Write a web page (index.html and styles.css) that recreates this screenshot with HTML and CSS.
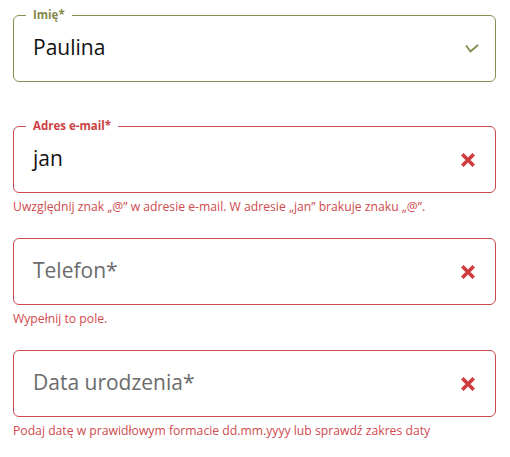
FILE: index.html
```html
<!DOCTYPE html>
<html>
    <head>
        <title>Formularz</title>
        <link rel="stylesheet" href="styles.css">
    </head>
    <body>
        <form class="form">

            <div class="field valid">
                <div class="box">
                    <span class="label">Imię*</span>
                    <span class="value">Paulina</span>
                    <svg class="icon" width="14" height="9" viewBox="0 0 14 9">
                        <polyline points="1,1.5 5.5,7.5 13,1" fill="none" stroke="#86874a" stroke-width="1.8" />
                    </svg>
                </div>
                <div class="msg"></div>
            </div>

            <div class="field invalid">
                <div class="box">
                    <span class="label">Adres e-mail*</span>
                    <span class="value">jan</span>
                    <svg class="icon" width="16" height="16" viewBox="0 0 16 16">
                        <path d="M2.3 2.3 L13.7 13.7 M13.7 2.3 L2.3 13.7" stroke="#cf3c3f" stroke-width="3.6" />
                    </svg>
                </div>
                <div class="msg">Uwzględnij znak „@” w adresie e-mail. W adresie „jan” brakuje znaku „@”.</div>
            </div>

            <div class="field invalid">
                <div class="box">
                    <span class="placeholder">Telefon*</span>
                    <svg class="icon" width="16" height="16" viewBox="0 0 16 16">
                        <path d="M2.3 2.3 L13.7 13.7 M13.7 2.3 L2.3 13.7" stroke="#cf3c3f" stroke-width="3.6" />
                    </svg>
                </div>
                <div class="msg">Wypełnij to pole.</div>
            </div>

            <div class="field invalid">
                <div class="box">
                    <span class="placeholder">Data urodzenia*</span>
                    <svg class="icon" width="16" height="16" viewBox="0 0 16 16">
                        <path d="M2.3 2.3 L13.7 13.7 M13.7 2.3 L2.3 13.7" stroke="#cf3c3f" stroke-width="3.6" />
                    </svg>
                </div>
                <div class="msg">Podaj datę w prawidłowym formacie dd.mm.yyyy lub sprawdź zakres daty</div>
            </div>

        </form>
    </body>
</html>
```

FILE: styles.css
```css
body {
    margin: 0;
    background-color: #fff;
    font-family: "Open Sans", "Noto Sans", sans-serif;
}

.form {
    padding: 15px 14px 0 13px;
}

.field {
    margin-bottom: 23px;
}

.field.valid {
    margin-bottom: 22px;
}

.box {
    position: relative;
    display: flex;
    align-items: center;
    height: 65px;
    padding: 0 19px 0 19px;
    border: 1px solid;
    border-radius: 6px;
}

.valid .box {
    border-color: #8b8c52;
    padding-right: 16px;
}

.invalid .box {
    border-color: #cc4a4d;
}

.label {
    position: absolute;
    top: -8px;
    left: 12px;
    padding: 0 7px;
    background-color: #fff;
    font-size: 11.5px;
    font-weight: 700;
    line-height: 14px;
}

.valid .label {
    color: #86874a;
}

.invalid .label {
    color: #cc3f43;
}

.value,
.placeholder {
    flex: 1;
    font-size: 21px;
    line-height: 26px;
    margin-top: -3px;
}

.value {
    color: #111;
}

.placeholder {
    color: #6b6b6b;
}

.icon {
    flex-shrink: 0;
}

.msg {
    height: 16px;
    margin-top: 6px;
    font-size: 12.2px;
    line-height: 16px;
    color: #cf4a4d;
}
```
